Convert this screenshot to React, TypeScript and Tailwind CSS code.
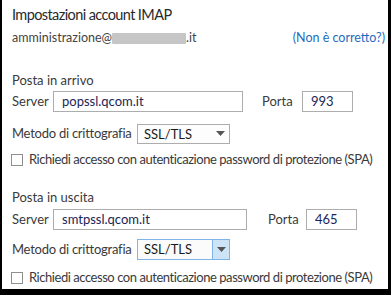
import React from "react";

const font = { fontFamily: 'Lato, "Noto Sans", sans-serif' };

function Arrow() {
  return (
    <svg width="9" height="5" viewBox="0 0 9 5" className="block">
      <path d="M0 0 H9 L4.5 5 Z" fill="#555" />
    </svg>
  );
}

function Section({
  title,
  server,
  port,
  serverW,
  portGap,
  portW,
  serverMt,
  selectMt,
  checkMt,
  focused,
}: {
  title: string;
  server: string;
  port: string;
  serverW: string;
  portGap: string;
  portW: string;
  serverMt: string;
  selectMt: string;
  checkMt: string;
  focused?: boolean;
}) {
  return (
    <div className="flex flex-col">
      <div className="h-[20px] leading-[20px] text-[13px] text-[#3a3a3a]">{title}</div>
      <div className={`flex items-center h-[21px] ${serverMt}`}>
        <span className="w-[41px] shrink-0 text-[13px] text-[#3a3a3a]">Server</span>
        <div
          className={`h-[21px] shrink-0 ${serverW} border border-[#adadad] bg-white pl-[8px] text-[13px] leading-[19px] text-[#1b2556]`}
        >
          {server}
        </div>
        <span className={`${portGap} ${portW} shrink-0 text-[13px] text-[#3a3a3a]`}>Porta</span>
        <div className="shrink-0 h-[21px] w-[51px] border border-[#adadad] bg-white pl-[8px] text-[13px] leading-[19px] text-[#1b2556]">
          {port}
        </div>
      </div>
      <div className={`flex items-center ${selectMt} h-[21px]`}>
        <span className="w-[125px] shrink-0 whitespace-nowrap text-[13px] tracking-[-0.25px] text-[#3a3a3a]">
          Metodo di crittografia
        </span>
        {focused ? (
          <div className="flex h-[21px] w-[93px] shrink-0 border border-[#7eb4ea] bg-[#fbfbfb]">
            <div className="flex-1 pl-[6px] text-[13px] leading-[19px] text-[#1a1a1a]">SSL/TLS</div>
            <div className="flex w-[17px] items-center justify-center border-l border-[#7eb4ea] bg-[#cde4f7]">
              <Arrow />
            </div>
          </div>
        ) : (
          <div className="flex h-[20px] w-[93px] shrink-0 border border-[#adadad] bg-[#fdfdfd]">
            <div className="flex-1 pl-[6px] text-[13px] leading-[18px] text-[#1a1a1a]">SSL/TLS</div>
            <div className="flex w-[17px] items-center justify-center">
              <Arrow />
            </div>
          </div>
        )}
      </div>
      <div className={`flex items-center ${checkMt} h-[14px]`}>
        <div className="ml-[-1px] h-[12px] w-[12px] shrink-0 border border-[#8e8f8f] bg-white" />
        <span className="ml-[6px] text-[13px] tracking-[-0.45px] text-[#3a3a3a] whitespace-nowrap">
          Richiedi accesso con autenticazione password di protezione (SPA)
        </span>
      </div>
    </div>
  );
}

export default function App() {
  return (
    <div className="w-[391px] h-[295px] bg-black overflow-hidden" style={font}>
      <div className="ml-[2px] mr-[3px] h-[289px] bg-white flex flex-col pl-[10px] pr-[3px]">
        <div className="mt-[3px] h-[24px] leading-[24px] text-[14.5px] tracking-[-0.6px] text-[#2a2a2a]">
          Impostazioni account IMAP
        </div>
        <div className="mt-[2px] flex items-center h-[18px] text-[12.5px] text-[#444]">
          <span>amministrazione@</span>
          <span className="inline-block h-[11px] w-[74px] bg-[#c6c6c6] rounded-[1px]" />
          <span>.it</span>
          <span className="ml-auto text-[#1f6cc0]">(Non è corretto?)</span>
        </div>
        <div className="mt-[23px]">
          <Section
            title="Posta in arrivo"
            server="popssl.qcom.it"
            port="993"
            serverW="w-[190px]"
            portGap="ml-[19px]"
            portW="w-[40px]"
            serverMt="mt-[1px]"
            selectMt="mt-[11px]"
            checkMt="mt-[9px]"
          />
        </div>
        <div className="mt-[20px]">
          <Section
            title="Posta in uscita"
            server="smtpssl.qcom.it"
            port="465"
            serverW="w-[194px]"
            portGap="ml-[21px]"
            portW="w-[38px]"
            serverMt="mt-[2px]"
            selectMt="mt-[9px]"
            checkMt="mt-[11px]"
            focused
          />
        </div>
      </div>
    </div>
  );
}
